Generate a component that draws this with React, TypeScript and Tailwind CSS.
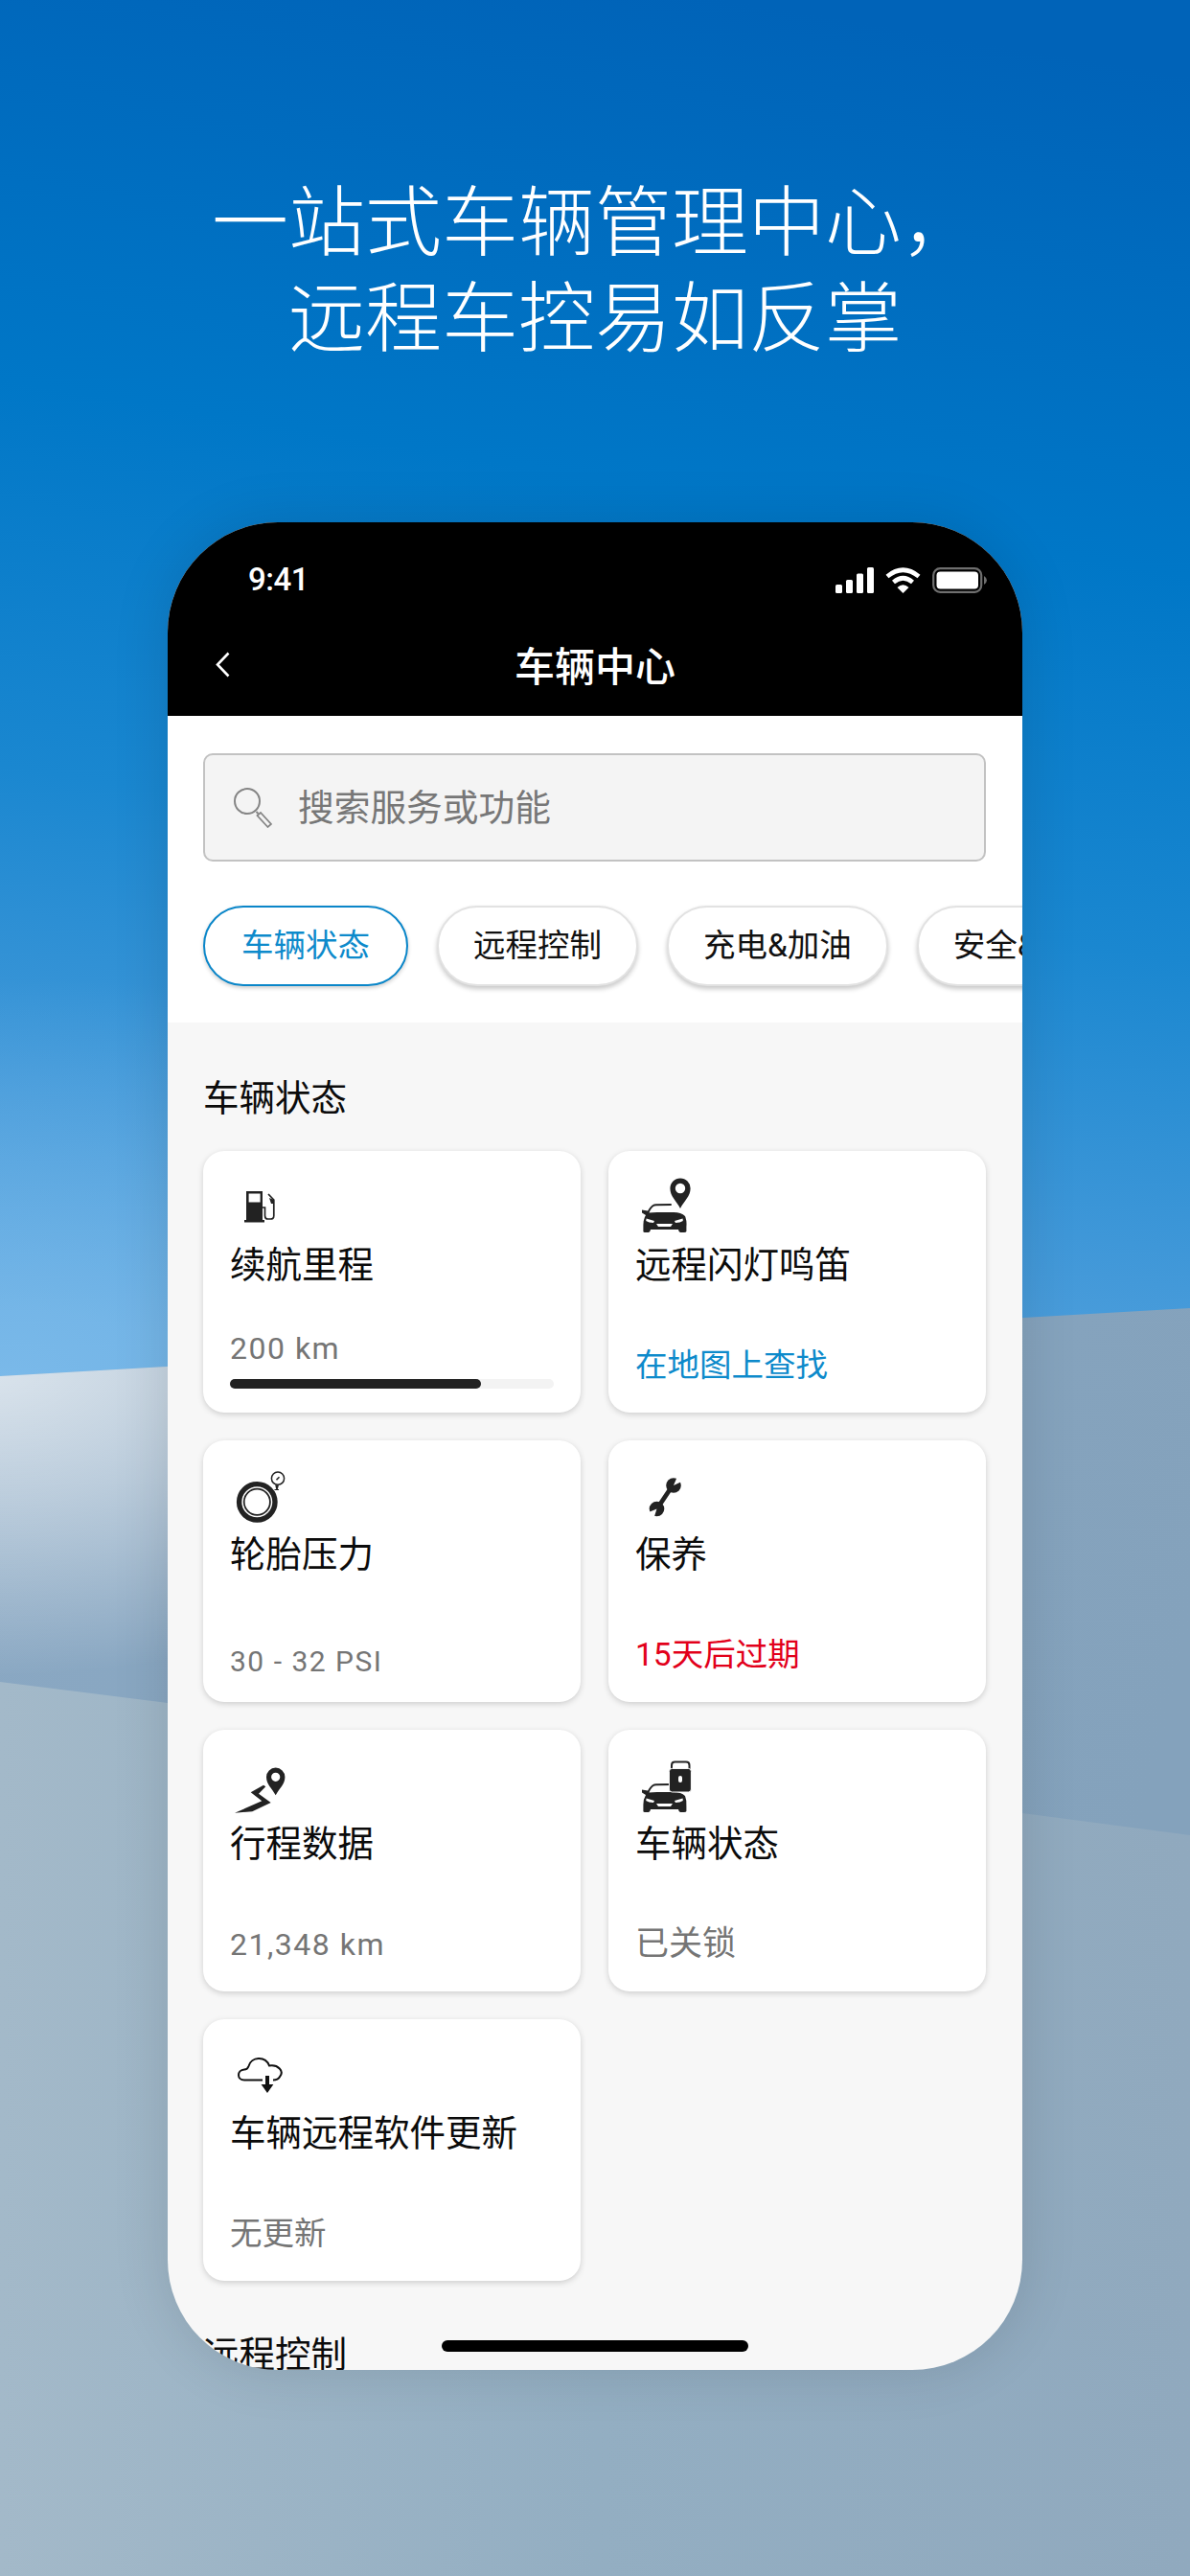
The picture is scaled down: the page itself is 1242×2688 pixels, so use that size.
import React from "react";

const INK = "#222222";

function Car({ x, y }: { x: number; y: number }) {
  return (
    <g transform={`translate(${x} ${y})`}>
      <path d="M6 10 Q9 3 13 1.4 Q15 1 30 1" fill="none" stroke={INK} strokeWidth="2" strokeLinecap="round" />
      <path
        d="M0 6.6 L6 7.4 L7.5 9.6 Q11 9 16 9 H33 Q41 9 45 13 Q47 18 46.4 24 V29 Q46 30 44 30 H40 Q38.5 30 38 27 H9 Q8.5 30 7 30 H3 Q1.4 30 1.4 29 V22 Q1.5 16 4 12 L0 9.4 Z"
        fill={INK}
      />
      <path d="M4.6 15.4 L13 18 L12 20 Q7 20 4.2 18 Z M42.6 15.4 L34 18 L35 20 Q40 20 42.8 18 Z" fill="#fff" />
      <path d="M15 21 H32 L30 24 H17 Z" fill="#fff" />
    </g>
  );
}

function Pin({ x, y, r, tip, hole }: { x: number; y: number; r: number; tip: number; hole: number }) {
  return (
    <path
      fillRule="evenodd"
      fill={INK}
      d={`M${x} ${y + tip} C${x - r * 0.4} ${y + r * 1.2} ${x - r} ${y + r * 0.8} ${x - r} ${y} A${r} ${r} 0 0 1 ${x + r} ${y} C${x + r} ${y + r * 0.8} ${x + r * 0.4} ${y + r * 1.2} ${x} ${y + tip} Z M${x - hole} ${y} a${hole} ${hole} 0 1 0 ${hole * 2} 0 a${hole} ${hole} 0 1 0 ${-hole * 2} 0 Z`}
    />
  );
}

function IconBox({ children }: { children: React.ReactNode }) {
  return (
    <svg viewBox="0 0 60 60" className="block h-[60px] w-[60px] shrink-0">
      {children}
    </svg>
  );
}

const FuelIcon = () => (
  <IconBox>
    <path fillRule="evenodd" fill={INK} d="M17 14 H34 V44 H36 V46.4 H15 V44 H17 Z M19.6 16.4 V25.4 H31.6 V16.4 Z" />
    <path d="M34 31 H36.5 V39.5 Q36.5 43 39.5 43 H42.5 Q45.8 43 45.8 39.5 V23 L40 17" fill="none" stroke={INK} strokeWidth="1.7" />
    <path d="M41 21 L45.8 23 V27 H43 Z" fill={INK} />
  </IconBox>
);

const CarPinIcon = () => (
  <IconBox>
    <Pin x={47} y={11} r={10.6} tip={21} hole={5.2} />
    <Car x={7} y={27} />
  </IconBox>
);

const TireIcon = () => (
  <IconBox>
    <circle cx="28.3" cy="36.3" r="18.7" fill="none" stroke={INK} strokeWidth="5.4" />
    <circle cx="28.3" cy="36.3" r="13.6" fill="none" stroke={INK} strokeWidth="1.8" />
    <circle cx="50" cy="11.7" r="6.6" fill="#fff" stroke={INK} strokeWidth="1.5" />
    <path d="M48.5 13.2 L51.5 10.2" stroke={INK} strokeWidth="1.6" />
    <path d="M47.2 18.5 H51 L49.8 23 H48.2 Z M46.5 23 H51 V24 H46.5 Z" fill={INK} />
  </IconBox>
);

const WrenchIcon = () => (
  <IconBox>
    <path d="M37 22 L25 40" stroke={INK} strokeWidth="4.8" />
    <circle cx="40" cy="19" r="7.8" fill={INK} />
    <circle cx="22.5" cy="43.5" r="7.8" fill={INK} />
    <path d="M40 19 L48.5 15 L44 9.5 Z" fill="#fff" />
    <path d="M22.5 43.5 L14 47 L19.5 53 Z" fill="#fff" />
  </IconBox>
);

const TripIcon = () => (
  <IconBox>
    <Pin x={47.7} y={21.3} r={9.7} tip={19} hole={4.6} />
    <path d="M5 58.7 L23.3 57.3 L42.7 48 L30 38.7 L37.3 31.3 L35 29.7 L21.7 37.3 L33.3 46.3 Z" fill={INK} />
  </IconBox>
);

const CarLockIcon = () => (
  <IconBox>
    <Car x={7} y={28} />
    <path d="M38 13 V9 Q38 5.6 41.5 5.6 H53 Q56.5 5.6 56.5 9 V13" fill="none" stroke={INK} strokeWidth="2" />
    <rect x="35.4" y="12.4" width="23" height="24.6" rx="3" fill={INK} stroke="#fff" strokeWidth="1" />
    <rect x="45" y="20" width="4" height="7" rx="2" fill="#fff" />
  </IconBox>
);

const CloudIcon = () => (
  <IconBox>
    <path
      d="M34 35.5 H15 C7 35.5 7 25 15 24.5 C17 24.5 18.5 24 19.5 21 C22 11 37 10 41 20.5 C50 19 57 26 52 32 C51 34 48 35.5 45 35.5"
      fill="none"
      stroke="#111"
      strokeWidth="2"
    />
    <path d="M37 31 H41 V40 H45.4 L39 49 L32.6 40 H37 Z" fill="#111" />
  </IconBox>
);

function Chip({ label, active }: { label: string; active?: boolean }) {
  return (
    <div
      className={
        active
          ? "flex h-[84px] shrink-0 items-center rounded-[42px] border-2 border-[#0a86c9] bg-white px-[38px] text-[33.5px] text-[#0d8acb] shadow-[0_2px_4px_rgba(0,0,0,0.2)]"
          : "flex h-[84px] shrink-0 items-center rounded-[42px] border-2 border-[#e2e2e2] bg-white px-[36px] text-[33.5px] text-[#111] shadow-[0_3px_5px_rgba(0,0,0,0.22)]"
      }
    >
      {label}
    </div>
  );
}

function Card({ icon, title, children }: { icon: React.ReactNode; title: string; children: React.ReactNode }) {
  return (
    <div className="flex h-[273px] flex-col rounded-[22px] bg-white px-[28px] pt-[28px] shadow-[0_2px_6px_rgba(0,0,0,0.17)]">
      {icon}
      <div className="mt-[7px] text-[37.5px] leading-[48px] text-[#0b0b0b]">{title}</div>
      {children}
    </div>
  );
}

const subGray = "mt-auto mb-[27px] text-[32px] leading-[44px] tracking-[1.5px] text-[#757575]";

export default function App() {
  return (
    <div
      lang="zh-CN"
      className="relative h-[2688px] w-[1242px] overflow-hidden font-['Roboto','Noto_Sans_CJK_SC',sans-serif]"
    >
      <svg viewBox="0 0 1242 2688" className="absolute inset-0 h-full w-full">
        <defs>
          <linearGradient id="sky" gradientUnits="userSpaceOnUse" x1="760" y1="0" x2="520" y2="1450">
            <stop offset="0" stopColor="#0063b8" />
            <stop offset="0.35" stopColor="#0077c7" />
            <stop offset="0.62" stopColor="#1a87d0" />
            <stop offset="0.85" stopColor="#4399d9" />
            <stop offset="1" stopColor="#5ba6df" />
          </linearGradient>
          <radialGradient id="skyGlow" gradientUnits="userSpaceOnUse" cx="0" cy="0" r="1" gradientTransform="translate(0 1440) scale(900 420)">
            <stop offset="0" stopColor="#8fc6f0" stopOpacity="0.6" />
            <stop offset="1" stopColor="#8fc6f0" stopOpacity="0" />
          </radialGradient>
          <linearGradient id="hillA" gradientUnits="userSpaceOnUse" x1="0" y1="1400" x2="1242" y2="1700">
            <stop offset="0" stopColor="#8aa8c3" />
            <stop offset="1" stopColor="#84a2bc" />
          </linearGradient>
          <radialGradient id="hillGlow" gradientUnits="userSpaceOnUse" cx="0" cy="0" r="1" gradientTransform="translate(-40 1420) scale(700 330)">
            <stop offset="0" stopColor="#ffffff" stopOpacity="0.72" />
            <stop offset="0.45" stopColor="#ffffff" stopOpacity="0.42" />
            <stop offset="1" stopColor="#ffffff" stopOpacity="0" />
          </radialGradient>
          <linearGradient id="hillB" gradientUnits="userSpaceOnUse" x1="0" y1="2300" x2="1242" y2="2300">
            <stop offset="0" stopColor="#a3b9c9" />
            <stop offset="0.5" stopColor="#93aec2" />
            <stop offset="1" stopColor="#90a9be" />
          </linearGradient>
        </defs>
        <rect width="1242" height="2688" fill="url(#sky)" />
        <rect width="1242" height="1500" fill="url(#skyGlow)" />
        <path d="M0 1436 L1242 1365 V2000 H0 Z" fill="url(#hillA)" />
        <path d="M0 1436 L1242 1365 V2000 H0 Z" fill="url(#hillGlow)" />
        <path d="M0 1755 L175 1777 L1067 1892 L1242 1915 V2688 H0 Z" fill="url(#hillB)" />
      </svg>

      <div className="relative flex flex-col items-center pt-[175px]">
        <h1 className="text-center text-[80px] leading-[100px] font-light text-white font-['Noto_Sans_CJK_SC',sans-serif]">
          一站式车辆管理中心，
          <br />
          远程车控易如反掌
        </h1>

        <div className="relative mt-[170px] flex h-[1928px] w-[892px] flex-col overflow-hidden rounded-[115px] bg-[#f7f7f7] shadow-[0_0_60px_rgba(0,0,0,0.12)]">
          <div className="flex h-[202px] shrink-0 flex-col bg-black pt-[38px] text-white">
            <div className="flex h-[44px] items-center justify-between pr-[37px] pl-[84px]">
              <span className="text-[33px] font-medium tracking-[-0.5px]">9:41</span>
              <div className="flex items-center gap-[12px]">
                <svg viewBox="0 0 40 27" className="h-[27px] w-[40px]" fill="#fff">
                  <rect x="0" y="18" width="7" height="9" rx="1.5" />
                  <rect x="11" y="13" width="7" height="14" rx="1.5" />
                  <rect x="22" y="6.5" width="7" height="20.5" rx="1.5" />
                  <rect x="33" y="0" width="7" height="27" rx="1.5" />
                </svg>
                <svg viewBox="0 0 37 27" className="h-[27px] w-[37px]" fill="none" stroke="#fff" strokeWidth="4.6">
                  <path d="M2 9.5 Q18.5 -4 35 9.5" />
                  <path d="M8.5 15.5 Q18.5 7 28.5 15.5" />
                  <path d="M12.5 21 L18.5 27 L24.5 21 Q18.5 15.5 12.5 21 Z" fill="#fff" stroke="none" />
                </svg>
                <svg viewBox="0 0 57 27" className="h-[27px] w-[57px]">
                  <rect x="1.2" y="1.2" width="50" height="24.6" rx="7" fill="none" stroke="#6f6f6f" strokeWidth="2.2" />
                  <rect x="4.5" y="4.5" width="43.5" height="18" rx="4" fill="#fff" />
                  <path d="M54 9 Q57 11 57 13.5 Q57 16 54 18 Z" fill="#6f6f6f" />
                </svg>
              </div>
            </div>
            <div className="mt-[24px] grid h-[84px] grid-cols-[1fr_auto_1fr] items-center pl-[49px]">
              <svg viewBox="0 0 16 27" className="h-[27px] w-[16px]" fill="none" stroke="#fff" strokeWidth="2.6">
                <path d="M14.5 1.5 L3 13.5 L14.5 25.5" />
              </svg>
              <div className="mr-[49px] text-[42px] leading-[56px] font-medium font-['Noto_Sans_CJK_SC',sans-serif]">车辆中心</div>
              <div />
            </div>
          </div>

          <div className="flex h-[320px] shrink-0 flex-col bg-white pt-[39px]">
            <div className="mr-[38px] ml-[37px] flex h-[113px] shrink-0 items-center rounded-[10px] border-2 border-[#c2c2c2] bg-[#f4f4f4] pl-[29px]">
              <svg viewBox="0 0 42 42" className="h-[42px] w-[42px] shrink-0" fill="none" stroke="#858585">
                <circle cx="15" cy="14" r="13" strokeWidth="2" />
                <path d="M24.5 25 L26.5 27" strokeWidth="2" />
                <path d="M25.5 29 L29 26 L40 38 L36.5 41 Z" strokeWidth="1.7" />
              </svg>
              <span className="ml-[26px] text-[37.7px] leading-[48px] text-[#777]">搜索服务或功能</span>
            </div>
            <div className="mt-[46px] flex gap-[30px] pl-[37px]">
              <Chip label="车辆状态" active />
              <Chip label="远程控制" />
              <Chip label="充电&加油" />
              <Chip label="安全&防护" />
            </div>
          </div>

          <div className="flex flex-col px-[37px] pt-[55px]">
            <div className="text-[37.5px] leading-[48px] text-[#0b0b0b]">车辆状态</div>
            <div className="mt-[31px] grid w-[817px] grid-cols-2 gap-x-[29px] gap-y-[29px]">
              <Card icon={<FuelIcon />} title="续航里程">
                <div className="mt-auto text-[32px] leading-[44px] tracking-[1.5px] text-[#757575]">200 km</div>
                <div className="mt-[10px] mb-[25px] h-[10px] w-full rounded-full bg-[#f3f3f3]">
                  <div className="h-full w-[77.6%] rounded-full bg-[#222]" />
                </div>
              </Card>
              <Card icon={<CarPinIcon />} title="远程闪灯鸣笛">
                <div className="mt-auto mb-[27px] text-[33.5px] leading-[44px] text-[#0d8acb]">在地图上查找</div>
              </Card>
              <Card icon={<TireIcon />} title="轮胎压力">
                <div className="mt-auto mb-[20px] text-[30px] leading-[44px] tracking-[1.5px] text-[#757575]">30 - 32 PSI</div>
              </Card>
              <Card icon={<WrenchIcon />} title="保养">
                <div className="mt-auto mb-[27px] text-[33.5px] leading-[44px] text-[#e2001a]">15天后过期</div>
              </Card>
              <Card icon={<TripIcon />} title="行程数据">
                <div className={subGray}>21,348 km</div>
              </Card>
              <Card icon={<CarLockIcon />} title="车辆状态">
                <div className="mt-auto mb-[27px] text-[35px] leading-[44px] text-[#757575]">已关锁</div>
              </Card>
              <Card icon={<CloudIcon />} title="车辆远程软件更新">
                <div className="mt-auto mb-[27px] text-[33.5px] leading-[44px] text-[#757575]">无更新</div>
              </Card>
            </div>
            <div className="mt-[53px] text-[37.5px] leading-[48px] text-[#0b0b0b]">远程控制</div>
          </div>

          <div className="absolute bottom-[19px] left-1/2 h-[12px] w-[320px] -translate-x-1/2 rounded-full bg-black" />
        </div>
      </div>
    </div>
  );
}
